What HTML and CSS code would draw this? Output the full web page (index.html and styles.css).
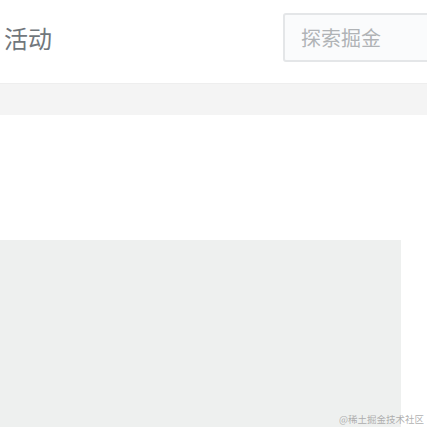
FILE: index.html
```html
<!DOCTYPE html>
<html lang="zh-CN">
<head>
<meta charset="utf-8">
<link rel="stylesheet" href="styles.css">
</head>
<body>
<div class="page">
  <header class="header">
    <h1 class="title">活动</h1>
    <div class="search"><span class="placeholder">探索掘金</span></div>
  </header>
  <div class="band"></div>
  <div class="spacer"></div>
  <div class="block"></div>
  <div class="watermark">@稀土掘金技术社区</div>
</div>
</body>
</html>
```
FILE: styles.css
```css
html, body {
  margin: 0;
  padding: 0;
  background: #ffffff;
}
.page {
  position: relative;
  width: 427px;
  height: 427px;
  overflow: hidden;
  font-family: "Noto Sans CJK SC", "Noto Sans", sans-serif;
}
.header {
  display: flex;
  align-items: center;
  height: 83px;
  padding-left: 4px;
  box-sizing: border-box;
}
.title {
  margin: 0 0 8px 0;
  font-size: 24px;
  font-weight: 400;
  color: #71777c;
  line-height: 1;
  flex: none;
}
.search {
  flex: none;
  margin-left: 231px;
  width: 170px;
  height: 49px;
  box-sizing: border-box;
  border: 2px solid #e4e6e8;
  border-radius: 3px;
  background: #fafbfc;
  display: flex;
  align-items: center;
  padding-left: 16px;
  margin-top: -8px;
}
.placeholder {
  font-size: 20px;
  color: #b0b3b6;
  line-height: 1;
}
.band {
  height: 32px;
  background: #f4f4f4;
  border-top: 1px solid #eeeeee;
  box-sizing: border-box;
}
.spacer {
  height: 125px;
}
.block {
  width: 401px;
  height: 187px;
  background: #eef0ef;
}
.watermark {
  position: absolute;
  right: 3px;
  bottom: 3px;
  font-size: 9.5px;
  line-height: 1;
  color: rgba(150, 150, 150, 0.75);
  font-family: "Noto Sans CJK SC", sans-serif;
}
```
